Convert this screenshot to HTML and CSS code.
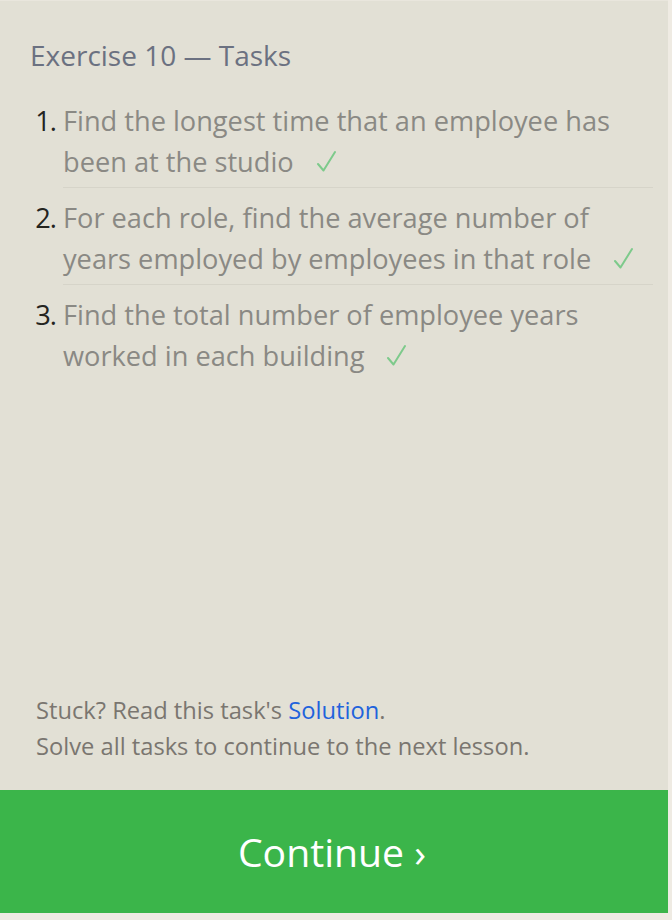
FILE: index.html
```html
<!DOCTYPE html>
<html>
<head>
<meta charset="utf-8">
<link rel="stylesheet" href="styles.css">
</head>
<body>
<div class="panel">
  <div class="content">
    <h2 class="title">Exercise 10 — Tasks</h2>
    <ol class="tasks">
      <li class="task"><span class="num">1.</span><span class="text">Find the longest time that an employee has been at the studio<svg class="check" width="20" height="22" viewBox="0 0 20 22"><polyline points="2,14 7.5,20.5 19,2" fill="none" stroke="#7dca8b" stroke-width="2" stroke-linecap="round" stroke-linejoin="round"/></svg></span></li>
      <li class="task"><span class="num">2.</span><span class="text">For each role, find the average number of years employed by employees in that role<svg class="check" width="20" height="22" viewBox="0 0 20 22"><polyline points="2,14 7.5,20.5 19,2" fill="none" stroke="#7dca8b" stroke-width="2" stroke-linecap="round" stroke-linejoin="round"/></svg></span></li>
      <li class="task last"><span class="num">3.</span><span class="text">Find the total number of employee years worked in each building<svg class="check" width="20" height="22" viewBox="0 0 20 22"><polyline points="2,14 7.5,20.5 19,2" fill="none" stroke="#7dca8b" stroke-width="2" stroke-linecap="round" stroke-linejoin="round"/></svg></span></li>
    </ol>
  </div>
  <div class="footer">
    <p class="hint">Stuck? Read this task's <a class="link" href="#">Solution</a>.</p>
    <p class="hint">Solve all tasks to continue to the next lesson.</p>
  </div>
  <button class="continue">Continue ›</button>
</div>
</body>
</html>
```
FILE: styles.css
```css
html, body {
  margin: 0;
  padding: 0;
  background: #efebe3;
}
body {
  font-family: "Open Sans", "Noto Sans", sans-serif;
}
.panel {
  width: 668px;
  height: 913px;
  background: #e2e0d5;
  border-top: 1px solid #e9e6dd;
  box-sizing: border-box;
  display: flex;
  flex-direction: column;
}
.content {
  flex: 1;
  padding: 36px 15px 0 30px;
}
.title {
  margin: 0;
  font-weight: 400;
  font-size: 28px;
  line-height: 36px;
  color: #6b7181;
}
.tasks {
  list-style: none;
  margin: 28px 0 0 0;
  padding: 0;
}
.task {
  display: flex;
  padding: 10px 0 6px 0;
  font-size: 27.2px;
  line-height: 40.5px;
}
.task:first-child { padding-top: 0; }
.num {
  width: 33px;
  flex: none;
  text-align: right;
  padding-right: 7px;
  color: #24241f;
  box-sizing: border-box;
  letter-spacing: -1px;
}
.text {
  flex: 1;
  color: #8a8984;
  border-bottom: 1px solid #d6d4c9;
  padding-bottom: 5px;
  margin-bottom: -6px;
}
.task.last .text { border-bottom: none; }
.check {
  margin-left: 22px;
  vertical-align: 0;
}
.footer {
  padding: 0 0 26px 36px;
}
.hint {
  margin: 0;
  font-size: 23.7px;
  line-height: 36px;
  color: #7a7670;
}
.link {
  color: #1f63dc;
  text-decoration: none;
}
.continue {
  display: block;
  width: 100%;
  height: 123px;
  border: none;
  margin: 0;
  padding: 0 4px 0 0;
  background: #3bb54a;
  color: #ffffff;
  font-family: "Open Sans", "Noto Sans", sans-serif;
  font-size: 39.2px;
  text-align: center;
}
```
